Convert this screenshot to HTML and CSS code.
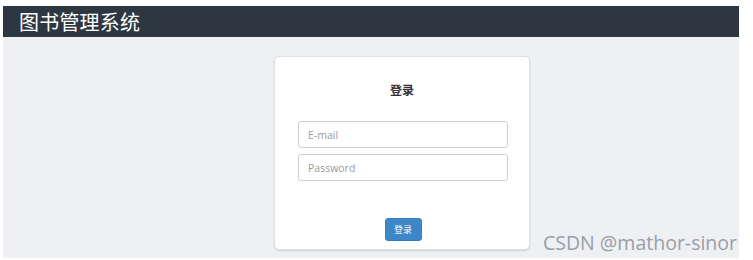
FILE: index.html
```html
<!DOCTYPE html>
<html lang="zh">
<head>
<meta charset="utf-8">
<link rel="stylesheet" href="styles.css">
</head>
<body>
<div class="page">
  <header class="topbar"><span class="brand">图书管理系统</span></header>
  <main class="main">
    <div class="card">
      <h3 class="title">登录</h3>
      <div class="field"><input class="input" type="text" placeholder="E-mail"></div>
      <div class="field"><input class="input" type="password" placeholder="Password"></div>
      <div class="actions"><button class="btn">登录</button></div>
    </div>
  </main>
  <div class="watermark">CSDN @mathor-sinor</div>
</div>
</body>
</html>
```
FILE: styles.css
```css
html, body { margin: 0; padding: 0; background: #fff; }
body { font-family: "Open Sans", "Noto Sans CJK SC", sans-serif; }
.page {
  position: relative;
  width: 753px;
  height: 260px;
  padding: 6px 14px 2px 3px;
  box-sizing: border-box;
  display: flex;
  flex-direction: column;
}
.topbar {
  height: 31px;
  background: #2e3741;
  display: flex;
  align-items: center;
  padding-left: 16px;
  flex: none;
}
.brand {
  color: #fff;
  font-family: "Noto Sans CJK SC", sans-serif;
  font-size: 20px;
  line-height: 1;
  letter-spacing: 0.2px;
}
.main {
  flex: 1;
  background: #eef0f4;
  padding-top: 19px;
  padding-left: 271px;
}
.card {
  width: 256px;
  height: 194px;
  box-sizing: border-box;
  background: #fff;
  border: 1px solid #dcdfe4;
  border-radius: 5px;
  box-shadow: 0 1px 2px rgba(0,0,0,0.12);
  padding: 25px 23px 0 23px;
  display: flex;
  flex-direction: column;
}
.title {
  margin: 0 0 23px 0;
  text-align: center;
  font-family: "Noto Sans CJK SC", sans-serif;
  font-size: 12px;
  font-weight: bold;
  color: #333;
  line-height: 16px;
}
.field { margin-bottom: 7px; }
.field + .field { margin-top: -1px; }
.input {
  display: block;
  width: 210px;
  height: 27px;
  box-sizing: border-box;
  border: 1px solid #ccd0d5;
  border-radius: 3px;
  padding: 0 9px;
  font-family: "Open Sans", sans-serif;
  font-size: 10.5px;
  color: #555;
  outline: none;
}
.input::placeholder { color: #9a9a9a; }
.actions {
  margin-top: 30px;
  display: flex;
  justify-content: center;
  padding-left: 2px;
}
.btn {
  width: 37px;
  height: 23px;
  background: #3d87c9;
  border: 1px solid #357ebd;
  border-radius: 3px;
  color: #fff;
  font-family: "Noto Sans CJK SC", sans-serif;
  font-size: 9px;
  padding: 0;
  line-height: 1;
}
.watermark {
  position: absolute;
  left: 543px;
  top: 229px;
  font-family: "Open Sans", sans-serif;
  font-size: 19.5px;
  color: #9a9fa6;
  white-space: nowrap;
}
```
